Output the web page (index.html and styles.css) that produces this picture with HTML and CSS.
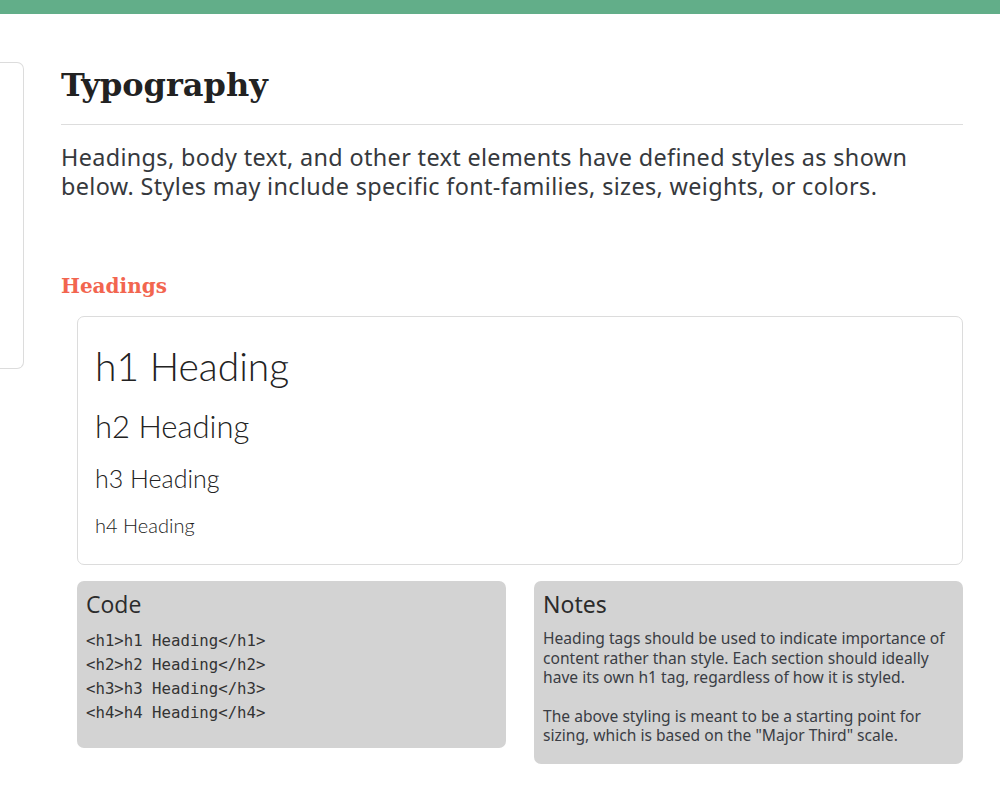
FILE: index.html
```html
<!DOCTYPE html>
<html lang="en">
<head>
<meta charset="utf-8">
<title>Typography</title>
<link rel="stylesheet" href="styles.css">
</head>
<body>
<div class="topbar"></div>
<div class="layout">
  <aside class="sidebar"></aside>
  <main class="main">
    <h1 class="page-title">Typography</h1>
    <p class="lead">Headings, body text, and other text elements have defined styles as shown below. Styles may include specific font-families, sizes, weights, or colors.</p>
    <h2 class="section-title">Headings</h2>
    <div class="sample">
      <div class="s-h1">h1 Heading</div>
      <div class="s-h2">h2 Heading</div>
      <div class="s-h3">h3 Heading</div>
      <div class="s-h4">h4 Heading</div>
    </div>
    <div class="panels">
      <div class="panel code-panel">
        <div class="panel-title code-title">Code</div>
        <pre class="code">&lt;h1&gt;h1 Heading&lt;/h1&gt;
&lt;h2&gt;h2 Heading&lt;/h2&gt;
&lt;h3&gt;h3 Heading&lt;/h3&gt;
&lt;h4&gt;h4 Heading&lt;/h4&gt;</pre>
      </div>
      <div class="panel notes-panel">
        <div class="panel-title notes-title">Notes</div>
        <p class="note">Heading tags should be used to indicate importance of content rather than style. Each section should ideally have its own h1 tag, regardless of how it is styled.</p>
        <p class="note">The above styling is meant to be a starting point for sizing, which is based on the "Major Third" scale.</p>
      </div>
    </div>
  </main>
</div>
</body>
</html>
```

FILE: styles.css
```css
html, body {
  margin: 0;
  padding: 0;
  background: #ffffff;
}
body {
  font-family: "Noto Sans", "DejaVu Sans", sans-serif;
  color: #333;
  overflow: hidden;
}
.topbar {
  height: 14px;
  background: #62ae89;
}
.layout {
  display: flex;
  align-items: flex-start;
  gap: 37px;
  padding-top: 48px;
  padding-right: 37px;
}
.sidebar {
  width: 23px;
  height: 305px;
  flex: none;
  border: 1px solid #dcdcdc;
  border-left: none;
  border-radius: 0 7px 7px 0;
}
.main {
  flex: 1;
  min-width: 0;
}
.page-title {
  font-family: "DejaVu Serif", serif;
  font-weight: bold;
  font-size: 32px;
  line-height: 46px;
  margin: 0;
  color: #222;
  padding-bottom: 16px;
  border-bottom: 1px solid #dddddd;
}
.lead {
  font-size: 23.4px;
  line-height: 29px;
  letter-spacing: 0.35px;
  margin: 18px 0 0 0;
  color: #36393d;
}
.section-title {
  font-family: "DejaVu Serif", serif;
  font-weight: bold;
  font-size: 20px;
  line-height: 30px;
  color: #f2654f;
  margin: 70px 0 0 0;
}
.sample {
  margin: 15px 0 0 16px;
  border: 1px solid #dcdcdc;
  border-radius: 7px;
  padding: 25px 17px 27px;
  font-family: Lato, "Noto Sans", sans-serif;
  font-weight: 300;
  color: #222;
}
.s-h1 { font-size: 39px; line-height: 48px; }
.s-h2 { font-size: 31px; line-height: 38px; margin-top: 17px; }
.s-h3 { font-size: 25px; line-height: 30px; margin-top: 18px; }
.s-h4 { font-size: 20px; line-height: 24px; margin-top: 20px; }
.panels {
  display: flex;
  gap: 28px;
  margin: 16px 0 0 16px;
  align-items: flex-start;
}
.panel {
  flex: 1;
  background: #d3d3d3;
  border-radius: 7px;
  padding: 8px 9px;
}
.code-panel { height: 151px; }
.panel-title {
  font-size: 23px;
  line-height: 30px;
  color: #2b2b2b;
}
.code-title { font-family: "Open Sans", "Noto Sans", sans-serif; }
.code {
  margin: 10px 0 0 0;
  font-family: "DejaVu Sans Mono", "Liberation Mono", monospace;
  font-size: 15.7px;
  line-height: 24px;
  color: #333;
}
.note {
  margin: 10px 0 0 0;
  font-size: 15.6px;
  line-height: 19.5px;
  color: #3a3d44;
}
.note + .note { margin-top: 19px; }
.notes-panel { padding-bottom: 18px; }
```
